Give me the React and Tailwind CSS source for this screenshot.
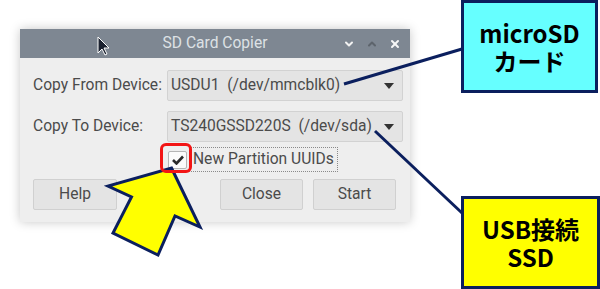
import { ChevronDown, ChevronUp, X } from "lucide-react"

const font = { fontFamily: "Roboto, 'Liberation Sans', sans-serif" }

const Combo = ({ text }) => (
  <div className="flex-1 h-[31px] flex items-center justify-between bg-[#e4e4e4] border border-[#d2d2d2] rounded-[2px] pl-[3px] pr-[8px]">
    <span className="text-[15.6px] text-[#4b4b4b] whitespace-pre">{text}</span>
    <svg width="10" height="6" viewBox="0 0 10 6"><path d="M0 0h10L5 6z" fill="#333" /></svg>
  </div>
)

const Button = ({ label, className = "" }) => (
  <button className={`h-[31px] w-[83px] bg-[#e4e4e4] border border-[#d0d0d0] rounded-[2px] text-[15.6px] text-[#4b4b4b] ${className}`}>
    {label}
  </button>
)

const CopierWindow = () => (
  <div className="w-[390px] flex flex-col shadow-[0_0_10px_rgba(0,0,0,0.22)]" style={font}>
    <div className="h-[29px] bg-[#7e8792] relative flex items-center justify-center">
      <span className="text-[15.6px] text-[#dde1e5]">SD Card Copier</span>
      <div className="absolute right-[9px] top-0 h-full flex items-center gap-[11px]">
        <ChevronDown size={12} strokeWidth={4} className="text-[#f2f2f2]" />
        <ChevronUp size={12} strokeWidth={4} className="text-[#5d646c]" />
        <X size={12} strokeWidth={4} className="text-[#f7f7f7]" />
      </div>
    </div>
    <div className="bg-[#eeeeee] pl-[13px] pr-[7px] pt-[12px] pb-[12px] flex flex-col">
      <div className="flex items-center">
        <span className="w-[134px] text-[15.6px] text-[#4b4b4b]">Copy From Device:</span>
        <Combo text="USDU1  (/dev/mmcblk0)" />
      </div>
      <div className="flex items-center mt-[10px]">
        <span className="w-[134px] text-[15.6px] text-[#4b4b4b]">Copy To Device:</span>
        <Combo text="TS240GSSD220S  (/dev/sda)" />
      </div>
      <div className="flex items-center mt-[5px] h-[25px] pl-[135px]">
        <div className="w-[19px] h-[18px] bg-[#fbfbfb] border border-[#b5b5b5] rounded-[2px] flex items-center justify-center">
          <svg width="12" height="10" viewBox="0 0 12 10"><path d="M1 5l3.5 3.5L11 1.5" fill="none" stroke="#2b2b2b" strokeWidth="2.6" /></svg>
        </div>
        <div className="ml-[2px] h-[25px] flex items-center px-[3px] border border-dotted border-[#8a8a8a]">
          <span className="text-[15.6px] text-[#4b4b4b]">New Partition UUIDs</span>
        </div>
      </div>
      <div className="flex items-center mt-[7px] pr-[7px]">
        <Button label="Help" className="w-[84px]" />
        <div className="flex-1" />
        <Button label="Close" />
        <Button label="Start" className="ml-[10px]" />
      </div>
    </div>
  </div>
)

const Callout = ({ className, lines }) => (
  <div
    className={`absolute flex flex-col items-center justify-center border-[3px] border-[#0b1f5e] font-bold text-black text-[24px] leading-[28px] ${className}`}
    style={{ fontFamily: "'Noto Sans CJK JP', 'Noto Sans', sans-serif" }}
  >
    {lines.map((l) => <span key={l} className="leading-[28px]">{l}</span>)}
  </div>
)

export default function App() {
  return (
    <div className="relative w-[600px] h-[289px] bg-white overflow-hidden pl-[20px] pt-[29px]">
      <CopierWindow />

      <svg className="absolute left-0 top-0 pointer-events-none" width="600" height="289">
        <line x1="344" y1="84" x2="462" y2="49" stroke="#0b1f5e" strokeWidth="3" />
        <line x1="375" y1="131" x2="462" y2="213" stroke="#0b1f5e" strokeWidth="3" />
        <polygon
          points="171.5,168 200,227 175,216 158,255 113,233 131.5,197 108,186"
          fill="#ffff00"
          stroke="#0b1f5e"
          strokeWidth="3"
          strokeLinejoin="miter"
        />
        <path d="M98 37v16l4-4 3 6 2-1-3-6h5z" fill="#1b2230" stroke="#fff" strokeWidth="1" />
      </svg>

      <div className="absolute left-[160px] top-[143px] w-[32px] h-[30px] border-[3px] border-[#f21414] rounded-[6px]" />

      <Callout className="left-[461px] top-[0px] w-[137px] h-[93px] bg-[#66ffff]" lines={["microSD", "カード"]} />
      <Callout className="left-[461px] top-[196px] w-[139px] h-[93px] bg-[#ffff00]" lines={["USB接続", "SSD"]} />
    </div>
  )
}
